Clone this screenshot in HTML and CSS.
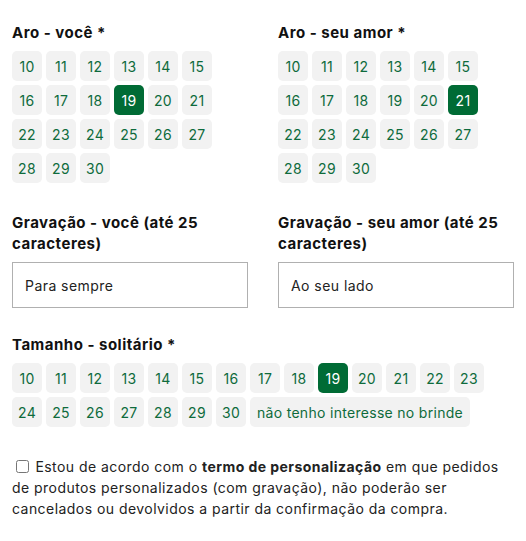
FILE: index.html
```html
<html>

<head>
  <meta name="viewport" content="width=device-width, initial-scale=1">
  <link rel="stylesheet" href="styles.css">
</head>

<body>
  <form class="personalize">
    <div class="pair sizes">
      <div class="field">
        <div class="label">Aro - você *</div>
        <div class="chips">
          <span class="chip">10</span><span class="chip">11</span><span class="chip">12</span>
          <span class="chip">13</span><span class="chip">14</span><span class="chip">15</span>
          <span class="chip">16</span><span class="chip">17</span><span class="chip">18</span>
          <span class="chip selected">19</span><span class="chip">20</span><span class="chip">21</span>
          <span class="chip">22</span><span class="chip">23</span><span class="chip">24</span>
          <span class="chip">25</span><span class="chip">26</span><span class="chip">27</span>
          <span class="chip">28</span><span class="chip">29</span><span class="chip">30</span>
        </div>
      </div>
      <div class="field">
        <div class="label">Aro - seu amor *</div>
        <div class="chips">
          <span class="chip">10</span><span class="chip">11</span><span class="chip">12</span>
          <span class="chip">13</span><span class="chip">14</span><span class="chip">15</span>
          <span class="chip">16</span><span class="chip">17</span><span class="chip">18</span>
          <span class="chip">19</span><span class="chip">20</span><span class="chip selected">21</span>
          <span class="chip">22</span><span class="chip">23</span><span class="chip">24</span>
          <span class="chip">25</span><span class="chip">26</span><span class="chip">27</span>
          <span class="chip">28</span><span class="chip">29</span><span class="chip">30</span>
        </div>
      </div>
    </div>

    <div class="pair engraving">
      <div class="field">
        <div class="label">Gravação - você (até 25 caracteres)</div>
        <input class="text" type="text" value="Para sempre">
      </div>
      <div class="field">
        <div class="label">Gravação - seu amor (até 25 caracteres)</div>
        <input class="text" type="text" value="Ao seu lado">
      </div>
    </div>

    <div class="field">
      <div class="label">Tamanho - solitário *</div>
      <div class="chips">
        <span class="chip">10</span><span class="chip">11</span><span class="chip">12</span>
        <span class="chip">13</span><span class="chip">14</span><span class="chip">15</span>
        <span class="chip">16</span><span class="chip">17</span><span class="chip">18</span>
        <span class="chip selected">19</span><span class="chip">20</span><span class="chip">21</span>
        <span class="chip">22</span><span class="chip">23</span><span class="chip">24</span>
        <span class="chip">25</span><span class="chip">26</span><span class="chip">27</span>
        <span class="chip">28</span><span class="chip">29</span><span class="chip">30</span>
        <span class="chip wide">não tenho interesse no brinde</span>
      </div>
    </div>

    <label class="terms">
      <input type="checkbox"> Estou de acordo com o <b>termo de personalização</b> em que pedidos
      de produtos personalizados (com gravação), não poderão ser cancelados ou devolvidos a partir
      da confirmação da compra.
    </label>
  </form>
</body>

</html>
```
FILE: styles.css
```css
body {
  margin: 0;
  padding: 22px 12px 0 12px;
  font-family: Inter, sans-serif;
  font-size: 14px;
  letter-spacing: 0.45px;
  color: #222;
  background-color: white;
}

.personalize {
  margin: 0;
  max-width: 502px;
}

.pair {
  display: grid;
  grid-template-columns: 236px 236px;
  column-gap: 30px;
}

.sizes {
  margin-bottom: 29px;
}

.engraving {
  margin-bottom: 26px;
}

.label {
  font-size: 15px;
  font-weight: bold;
  letter-spacing: 0.5px;
  line-height: 21px;
  color: #111;
  margin-bottom: 8px;
}

.chips {
  display: flex;
  flex-wrap: wrap;
  gap: 4px;
}

.chip {
  display: flex;
  align-items: center;
  justify-content: center;
  min-width: 30px;
  height: 30px;
  box-sizing: border-box;
  border-radius: 5px;
  background-color: #f2f2f2;
  color: #0e6b3c;
  font-size: 14px;
  letter-spacing: 0.3px;
}

.chip.selected {
  background-color: #006b35;
  color: white;
}

.chip.wide {
  padding: 0 7px;
}

.pair .chips {
  width: 204px;
}

.text {
  display: block;
  width: 236px;
  height: 46px;
  box-sizing: border-box;
  border: 1px solid #b0b0b0;
  padding: 0 12px;
  font-family: Inter, sans-serif;
  font-size: 14px;
  letter-spacing: 0.45px;
  color: #222;
  margin-top: 0;
}

.terms {
  display: block;
  margin-top: 29px;
  line-height: 21px;
  color: #222;
}

.terms input {
  width: 13px;
  height: 13px;
  margin: 0 2px 0 4px;
  vertical-align: -1px;
}
```
